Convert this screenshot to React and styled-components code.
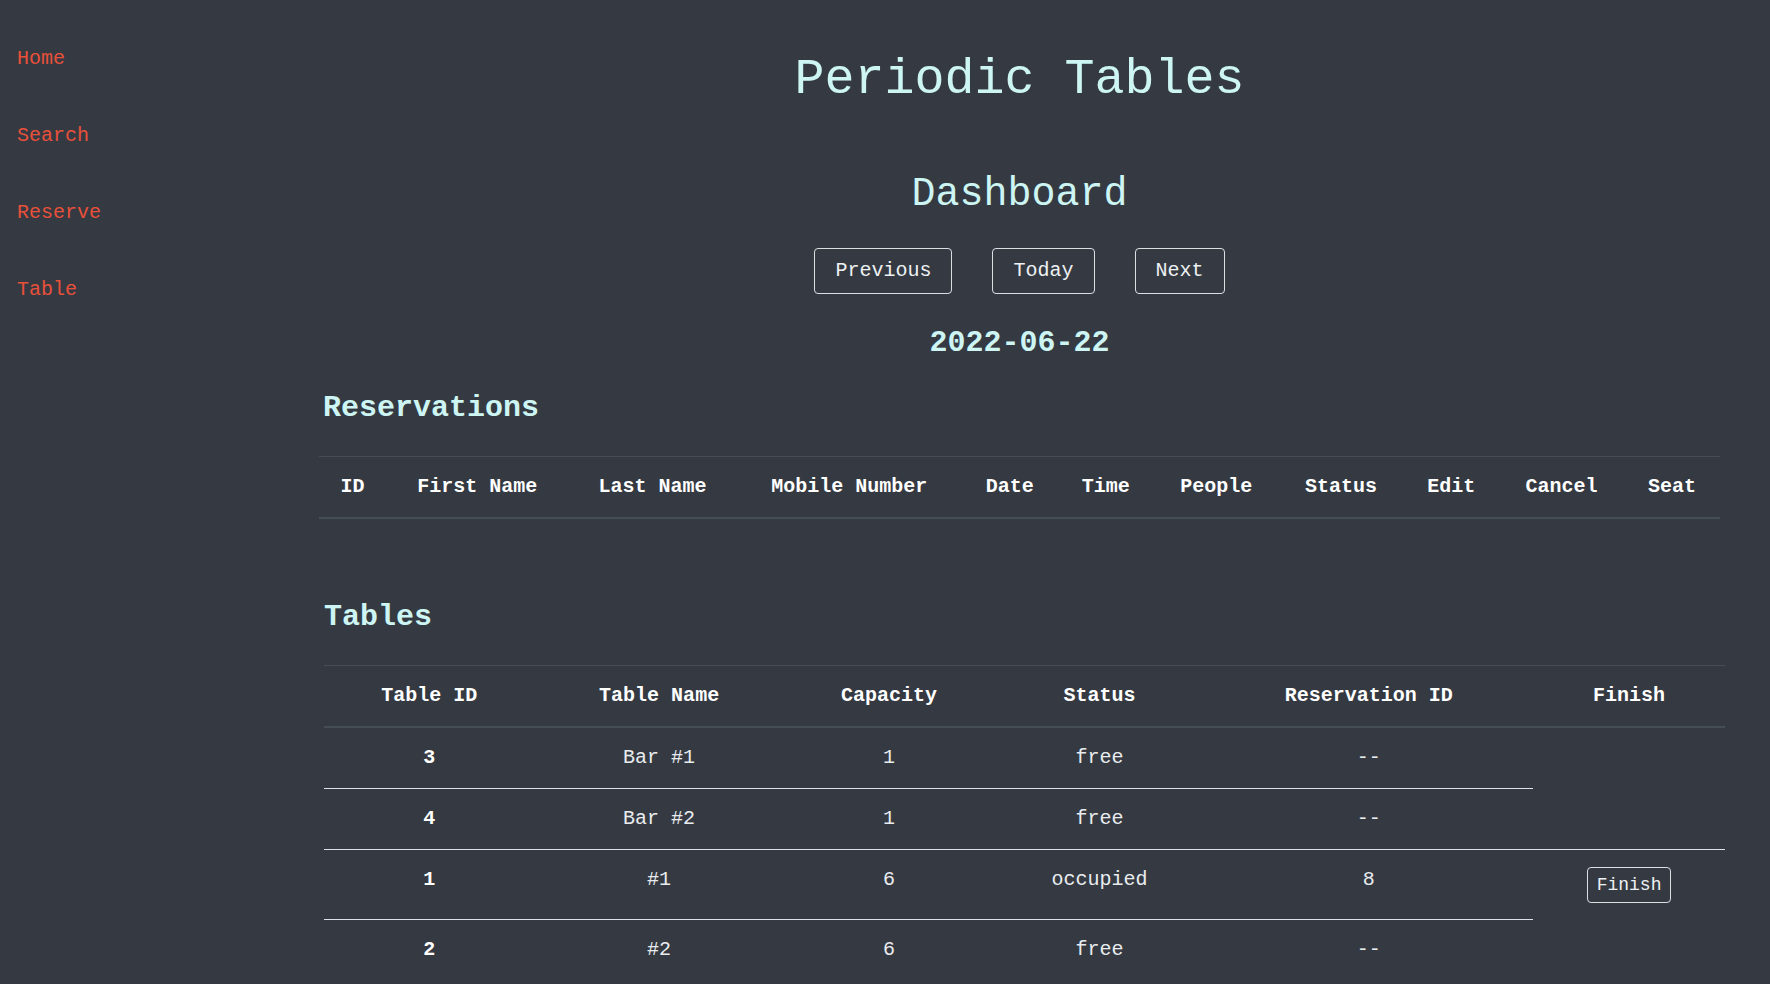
import React from 'react'
import styled, { createGlobalStyle } from 'styled-components'

const GlobalStyle = createGlobalStyle`
    html, body {
        margin: 0;
        padding: 0;
        background-color: #353a42;
        font-family: "Liberation Mono", "Courier New", monospace;
    }
`;

const Page = styled.div`
    display: flex;
    min-height: 984px;
    background-color: #353a42;
`;

const SideNav = styled.nav`
    width: 270px;
    flex-shrink: 0;
    display: flex;
    flex-direction: column;
    gap: 53px;
    padding: 47px 0 0 17px;
    box-sizing: border-box;
`;

const NavLink = styled.a`
    color: #e8503a;
    font-size: 20px;
    line-height: 24px;
    text-decoration: none;

    &:hover {
        text-decoration: underline;
    }
`;

const Main = styled.main`
    flex: 1;
    padding: 50px 50px 0 49px;
    min-width: 0;
`;

const Title = styled.h1`
    margin: 0;
    text-align: center;
    font-weight: normal;
    font-size: 50px;
    line-height: 60px;
    color: #cdf5f3;
`;

const SubTitle = styled.h2`
    margin: 61px 0 0;
    text-align: center;
    font-weight: normal;
    font-size: 40px;
    line-height: 48px;
    color: #cdf5f3;
`;

const ButtonRow = styled.div`
    display: flex;
    justify-content: center;
    gap: 40px;
    margin-top: 29px;
`;

const OutlineButton = styled.button`
    font-family: inherit;
    font-size: ${p => p.$small ? '18px' : '20px'};
    line-height: ${p => p.$small ? '22px' : '24px'};
    padding: ${p => p.$small ? '6px 9px' : '10px 20px'};
    color: #eef1f3;
    background: transparent;
    border: 1px solid #dcdfe2;
    border-radius: 4px;
    cursor: pointer;
`;

const DateLabel = styled.h3`
    margin: 31px 0 0;
    text-align: center;
    font-size: 30px;
    line-height: 36px;
    font-weight: bold;
    color: #cdf5f3;
`;

const Section = styled.section`
    margin: ${p => p.$top}px ${p => -p.$shift}px 0 ${p => p.$shift}px;
`;

const SectionTitle = styled.h3`
    margin: 0 0 30px;
    padding-left: ${p => p.$indent || 0}px;
    font-size: 30px;
    line-height: 36px;
    font-weight: bold;
    color: #cdf5f3;
`;

const Table = styled.table`
    width: 100%;
    border-collapse: collapse;
    font-size: 20px;
    line-height: 28px;
    color: #e9ecef;
`;

const HeadCell = styled.th`
    padding: 16px;
    text-align: center;
    font-weight: bold;
    color: #fff;
    border-top: 1px solid #454d55;
    border-bottom: 2px solid #454d55;
    white-space: nowrap;
`;

const RowHead = styled.th`
    padding: 16px;
    text-align: center;
    vertical-align: top;
    font-weight: bold;
    color: #fff;
    border-top: 1px solid #dee2e6;
`;

const Cell = styled.td`
    padding: 16px;
    text-align: center;
    vertical-align: top;
    border-top: 1px solid #dee2e6;
    white-space: nowrap;
`;

const ButtonCell = styled(Cell)`
    padding-top: 17px;
    padding-bottom: 16px;
`;

const navItems = ['Home', 'Search', 'Reserve', 'Table'];

const reservationCols = ['ID', 'First Name', 'Last Name', 'Mobile Number', 'Date', 'Time', 'People', 'Status', 'Edit', 'Cancel', 'Seat'];

const tableCols = ['Table ID', 'Table Name', 'Capacity', 'Status', 'Reservation ID', 'Finish'];

const tables = [
    { table_id: 3, table_name: 'Bar #1', capacity: 1, reservation_id: null },
    { table_id: 4, table_name: 'Bar #2', capacity: 1, reservation_id: null },
    { table_id: 1, table_name: '#1', capacity: 6, reservation_id: 8 },
    { table_id: 2, table_name: '#2', capacity: 6, reservation_id: null },
];

export default function App() {
    return (
        <Page>
            <GlobalStyle />
            <SideNav>
                {navItems.map((item) => <NavLink key={item} href="#">{item}</NavLink>)}
            </SideNav>
            <Main>
                <Title>Periodic Tables</Title>
                <SubTitle>Dashboard</SubTitle>
                <ButtonRow>
                    <OutlineButton>Previous</OutlineButton>
                    <OutlineButton>Today</OutlineButton>
                    <OutlineButton>Next</OutlineButton>
                </ButtonRow>
                <DateLabel>2022-06-22</DateLabel>

                <Section $top={29} $shift={0}>
                    <SectionTitle $indent={4}>Reservations</SectionTitle>
                    <Table>
                        <thead>
                            <tr>
                                {reservationCols.map((col) => <HeadCell key={col}>{col}</HeadCell>)}
                            </tr>
                        </thead>
                        <tbody></tbody>
                    </Table>
                </Section>

                <Section $top={80} $shift={5}>
                    <SectionTitle>Tables</SectionTitle>
                    <Table>
                        <thead>
                            <tr>
                                {tableCols.map((col) => <HeadCell key={col}>{col}</HeadCell>)}
                            </tr>
                        </thead>
                        <tbody>
                            {tables.map((t) => (
                                <tr key={t.table_id}>
                                    <RowHead scope="row">{t.table_id}</RowHead>
                                    <Cell>{t.table_name}</Cell>
                                    <Cell>{t.capacity}</Cell>
                                    <Cell>{t.reservation_id ? 'occupied' : 'free'}</Cell>
                                    <Cell>{t.reservation_id || '--'}</Cell>
                                    {t.reservation_id && (
                                        <ButtonCell>
                                            <OutlineButton $small>Finish</OutlineButton>
                                        </ButtonCell>
                                    )}
                                </tr>
                            ))}
                        </tbody>
                    </Table>
                </Section>
            </Main>
        </Page>
    );
}
